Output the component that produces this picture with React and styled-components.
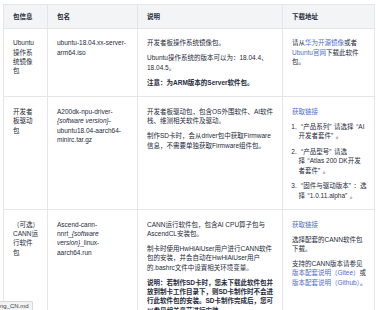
import React from "react";
import styled, { createGlobalStyle } from "styled-components";

const GlobalStyle = createGlobalStyle`
    html, body {
        margin: 0;
        padding: 0;
        overflow: hidden;
        background: #ffffff;
    }
    body {
        font-family: "Liberation Sans", "Noto Sans CJK SC", sans-serif;
        color: #252b3a;
    }
`;

const Page = styled.div`
    width: 376px;
    height: 310px;
    overflow: hidden;
    padding: 4px 0 0 3px;
    box-sizing: border-box;
`;

const Table = styled.table`
    width: 371px;
    table-layout: fixed;
    border-collapse: collapse;
    font-size: 6.5px;
    line-height: 9.3px;
`;

const Col = styled.col`
    width: ${(p) => p.$w}px;
`;

const HeadCell = styled.th`
    background-color: #f3f4f6;
    border: 1px solid #e4e6ea;
    padding: 6.8px 9px;
    text-align: left;
    font-weight: 700;
    color: #252b3a;
`;

const Cell = styled.td`
    border: 1px solid #e4e6ea;
    padding: 9.5px ${(p) => p.$padRight ?? 9}px 9.5px 9px;
    vertical-align: top;
    word-break: break-word;
`;

const Para = styled.p`
    margin: 0 0 5.7px 0;
    font-weight: ${(p) => (p.$strong ? 700 : 400)};
    &:last-child {
        margin-bottom: 0;
    }
`;

const Link = styled.a`
    color: #526ecc;
    text-decoration: none;
`;

const Var = styled.em`
    font-style: italic;
`;

const Steps = styled.ol`
    margin: 5.7px 0 0 0;
    padding-left: 6.5px;
    li + li {
        margin-top: 6.4px;
    }
`;

// CJK-style quote marks: the narrow Latin glyph padded out to CJK punctuation width
const OpenMark = styled.span`
    margin-left: 2.6px;
`;

const CloseMark = styled.span`
    margin-right: 2.6px;
`;

const Q = ({ children }) => (
    <>
        <OpenMark>“</OpenMark>
        {children}
        <CloseMark>”</CloseMark>
    </>
);

const StatusBubble = styled.div`
    position: fixed;
    left: 0;
    bottom: 0;
    height: 8px;
    padding: 0 3px 0 0;
    background: #f1f3f4;
    border: 1px solid #d5d8dc;
    border-left: none;
    border-bottom: none;
    border-top-right-radius: 2px;
    font-family: "Liberation Sans", sans-serif;
    font-size: 6px;
    line-height: 8px;
    color: #3c4043;
    white-space: nowrap;
`;

const App = () => {
    return (
        <Page>
            <GlobalStyle />
            <Table>
                <colgroup>
                    <Col $w={44} />
                    <Col $w={90} />
                    <Col $w={145} />
                    <Col $w={92} />
                </colgroup>
                <thead>
                    <tr>
                        <HeadCell>包信息</HeadCell>
                        <HeadCell>包名</HeadCell>
                        <HeadCell>说明</HeadCell>
                        <HeadCell>下载地址</HeadCell>
                    </tr>
                </thead>
                <tbody>
                    <tr>
                        <Cell>Ubuntu操作系统镜像包</Cell>
                        <Cell $padRight={7}>ubuntu-18.04.xx-server-arm64.iso</Cell>
                        <Cell $padRight={7}>
                            <Para>开发者板操作系统镜像包。</Para>
                            <Para>Ubuntu操作系统的版本可以为：18.04.4、18.04.5。</Para>
                            <Para $strong>注意：为ARM版本的Server软件包。</Para>
                        </Cell>
                        <Cell $padRight={7.2}>
                            请从<Link href="#">华为开源镜像</Link>或者<Link href="#">Ubuntu官网</Link>下载此软件包。
                        </Cell>
                    </tr>
                    <tr>
                        <Cell>开发者板驱动包</Cell>
                        <Cell $padRight={7}>
                            A200dk-npu-driver-<Var>{"{software version}"}</Var>-ubuntu18.04-aarch64-minirc.tar.gz
                        </Cell>
                        <Cell $padRight={7}>
                            <Para>开发者板驱动包，包含OS外围软件、AI软件栈、维测相关软件及驱动。</Para>
                            <Para>制作SD卡时，会从driver包中获取Firmware信息，不需要单独获取Firmware组件包。</Para>
                        </Cell>
                        <Cell $padRight={7.2}>
                            <Link href="#">获取链接</Link>
                            <Steps>
                                <li><Q>产品系列</Q>请选择<Q>AI开发者套件</Q>。</li>
                                <li><Q>产品型号</Q>请选择<Q>Atlas 200 DK开发者套件</Q>。</li>
                                <li><Q>固件与驱动版本</Q>：选择<Q>1.0.11.alpha</Q>。</li>
                            </Steps>
                        </Cell>
                    </tr>
                    <tr>
                        <Cell>（可选）CANN运行软件包</Cell>
                        <Cell $padRight={7}>
                            Ascend-cann-nnrt_<Var>{"{software version}"}</Var>_linux-aarch64.run
                        </Cell>
                        <Cell $padRight={7}>
                            <Para>CANN运行软件包，包含AI CPU算子包与AscendCL安装包。</Para>
                            <Para>制卡时使用HwHiAiUser用户进行CANN软件包的安装，并会自动在HwHiAiUser用户的.bashrc文件中设置相关环境变量。</Para>
                            <Para $strong>说明：若制作SD卡时，您未下载此软件包并放到制卡工作目录下，则SD卡制作时不会进行此软件包的安装。SD卡制作完成后，您可以参见相关章节进行安装。</Para>
                        </Cell>
                        <Cell $padRight={7.2}>
                            <Para><Link href="#">获取链接</Link></Para>
                            <Para>选择配套的CANN软件包下载。</Para>
                            <Para>
                                支持的CANN版本请参见<Link href="#">版本配套说明（Gitee）</Link>或<Link href="#">版本配套说明（Github）</Link>。
                            </Para>
                        </Cell>
                    </tr>
                </tbody>
            </Table>
            <StatusBubble>ng_CN.md</StatusBubble>
        </Page>
    );
};

export default App;
